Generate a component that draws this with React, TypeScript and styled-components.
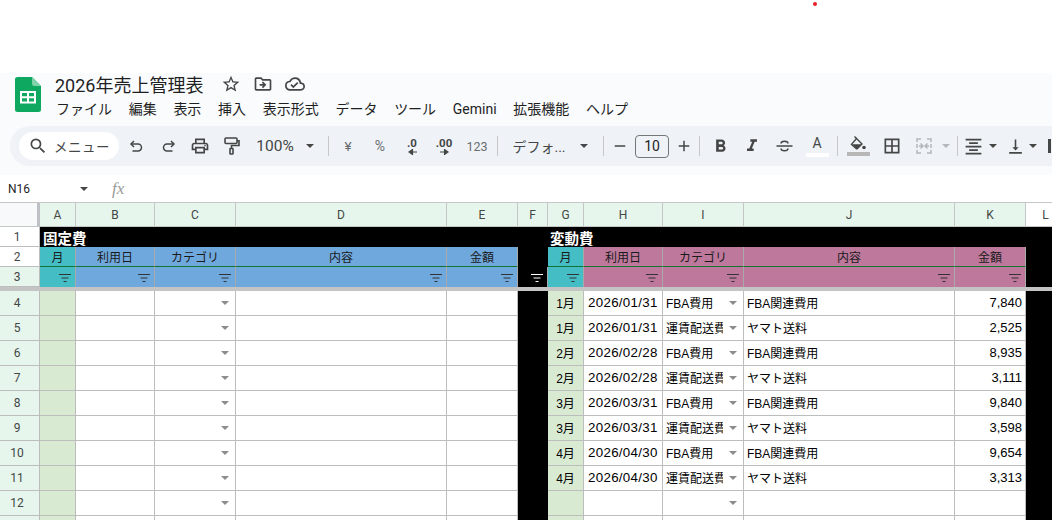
import styled, { createGlobalStyle } from 'styled-components'
import {
  MdSearch,
  MdOutlinePrint,
  MdStarBorder,
  MdOutlineDriveFileMove,
  MdOutlineCloudDone,
  MdFormatBold,
  MdFormatItalic,
  MdBorderAll,
  MdFormatAlignCenter,
  MdVerticalAlignBottom,
  MdAdd,
  MdRemove,
} from 'react-icons/md'

const menus = ['ファイル', '編集', '表示', '挿入', '表示形式', 'データ', 'ツール', 'Gemini', '拡張機能', 'ヘルプ']
const columns = ['A', 'B', 'C', 'D', 'E', 'F', 'G', 'H', 'I', 'J', 'K', 'L']
const headers = ['月', '利用日', 'カテゴリ', '内容', '金額']

const sales = [
  ['1月', '2026/01/31', 'FBA費用', 'FBA関連費用', '7,840'],
  ['1月', '2026/01/31', '運賃配送費', 'ヤマト送料', '2,525'],
  ['2月', '2026/02/28', 'FBA費用', 'FBA関連費用', '8,935'],
  ['2月', '2026/02/28', '運賃配送費', 'ヤマト送料', '3,111'],
  ['3月', '2026/03/31', 'FBA費用', 'FBA関連費用', '9,840'],
  ['3月', '2026/03/31', '運賃配送費', 'ヤマト送料', '3,598'],
  ['4月', '2026/04/30', 'FBA費用', 'FBA関連費用', '9,654'],
  ['4月', '2026/04/30', '運賃配送費', 'ヤマト送料', '3,313'],
  ['', '', '', '', ''],
]

const GlobalStyle = createGlobalStyle`
  html, body {
    margin: 0;
    background: #fff;
    overflow: hidden;
  }
  body {
    font-family: "Roboto", "Noto Sans CJK JP", sans-serif;
  }
`

const Page = styled.div`
  position: relative;
  width: 1052px;
  height: 520px;
  overflow: hidden;
  padding-top: 73px;
  box-sizing: border-box;
`

const RedDot = styled.div`
  position: absolute;
  left: 813px;
  top: 2px;
  width: 4px;
  height: 4px;
  border-radius: 50%;
  background: #e8202a;
`

const Chrome = styled.div`
  height: 102px;
  background: #f9fbfd;
`

const TitleArea = styled.div`
  height: 53px;
  display: flex;
  padding-left: 15px;
`

const LogoBox = styled.div`
  width: 26px;
  height: 35px;
  margin-top: 4px;
  margin-right: 14px;
`

const TitleColumn = styled.div`
  display: flex;
  flex-direction: column;
`

const TitleRow = styled.div`
  height: 22px;
  display: flex;
  align-items: center;
  color: #1f1f1f;
`

const DocTitle = styled.div`
  font-size: 18px;
  width: 160px;
  white-space: nowrap;
`

const TitleIcon = styled.span`
  width: 32px;
  display: flex;
  justify-content: center;
  font-size: 20px;
  color: #444746;
`

const MenuRow = styled.div`
  display: flex;
  gap: 16.700px;
  margin-top: 2px;
  margin-left: 1px;
  font-size: 14px;
  line-height: 24px;
  color: #1f1f1f;
`

const Toolbar = styled.div`
  height: 40px;
  margin-left: 10px;
  border-radius: 20px 0 0 20px;
  background: #eff3f8;
  display: flex;
  align-items: center;
  padding-left: 9px;
  color: #444746;
  white-space: nowrap;
`

const SearchPill = styled.div`
  width: 100px;
  height: 28px;
  border-radius: 14px;
  background: #fff;
  display: flex;
  align-items: center;
  padding-left: 9px;
  box-sizing: border-box;
  font-size: 13.500px;
  letter-spacing: 0.500px;
  color: #444746;
  flex: none;
  gap: 6px;
  margin-right: 1px;
`

const Tool = styled.div<{ $w: number; $size?: number; $soft?: boolean }>`
  width: ${(p) => p.$w}px;
  height: 28px;
  flex: none;
  display: flex;
  align-items: center;
  justify-content: center;
  font-size: ${(p) => p.$size ?? 20}px;
  color: ${(p) => (p.$soft ? '#6a6d6f' : '#444746')};
`

const Separator = styled.div<{ $ml?: number }>`
  width: 1px;
  height: 20px;
  margin-left: ${(p) => p.$ml ?? 0}px;
  background: #c7c7c7;
  flex: none;
`

const NextIcon = styled.div`
  width: 3px;
  height: 14px;
  margin-left: 14px;
  background: #444746;
  flex: none;
`

const Caret = styled.span<{ $muted?: boolean }>`
  flex: none;
  width: 0;
  height: 0;
  border-left: 4.500px solid transparent;
  border-right: 4.500px solid transparent;
  border-top: 4.500px solid ${(p) => (p.$muted ? '#b4b7ba' : '#444746')};
`

const SizeBox = styled.div`
  width: 34px;
  height: 23px;
  flex: none;
  border: 1px solid #747775;
  border-radius: 4px;
  box-sizing: border-box;
  display: flex;
  align-items: center;
  justify-content: center;
  font-size: 14px;
  color: #1f1f1f;
`

const DecimalLabel = styled.span`
  display: flex;
  flex-direction: column;
  align-items: center;
  font-size: 11.500px;
  font-weight: 700;
  line-height: 11px;
  color: #444746;
`

const ColorLetter = styled.div<{ $bar: string; $width?: number; $gap?: number }>`
  display: flex;
  flex-direction: column;
  align-items: center;
  font-size: 14px;
  line-height: 15px;
  color: #444746;
  &::after {
    content: '';
    display: block;
    width: ${(p) => p.$width ?? 23}px;
    height: 4px;
    margin-top: ${(p) => p.$gap ?? 2}px;
    background: ${(p) => p.$bar};
  }
`

const FormulaRow = styled.div`
  height: 27px;
  background: #fff;
  display: flex;
  align-items: center;
  padding-left: 8px;
  font-size: 12px;
  color: #1f1f1f;
`

const NameBox = styled.div`
  width: 72px;
`

const FormulaIcon = styled.span`
  margin-left: 24px;
  font-family: "Liberation Serif", serif;
  font-style: italic;
  font-size: 17px;
  color: #9a9a9a;
`

const Sheet = styled.div`
  display: grid;
  grid-template-columns: 40px 36px 79px 81px 211px 71px 30px 36px 79px 81px 211px 71px 40px;
  grid-template-rows: 24px 20px 20px 20px 4px repeat(10, 25px);
  border-top: 1px solid #c4c7c5;
  font-family: "Liberation Sans", "Noto Sans CJK JP", sans-serif;
  font-size: 12px;
  color: #000;
`

const BaseCell = styled.div`
  box-sizing: border-box;
  display: flex;
  align-items: center;
  white-space: nowrap;
  overflow: hidden;
`

const Corner = styled(BaseCell)`
  background: #f8f9fa;
  border-right: 3px solid #bdc1c6;
  border-bottom: 1px solid #c4c7c5;
`

const ColHead = styled(BaseCell)<{ $plain?: boolean }>`
  justify-content: center;
  background: ${(p) => (p.$plain ? '#fff' : '#e6f6ec')};
  border-right: 1px solid #c4c7c5;
  border-bottom: 1px solid #c4c7c5;
  font-family: "Roboto", sans-serif;
  font-size: 12px;
  color: #444746;
`

const RowHead = styled(BaseCell)<{ $tint?: boolean }>`
  justify-content: center;
  padding-right: 5px;
  background: ${(p) => (p.$tint ? '#e6f6ec' : '#fff')};
  border-right: 1px solid #bdbdbd;
  border-bottom: 1px solid #bdbdbd;
  font-family: "Roboto", sans-serif;
  font-size: 12px;
  color: #444746;
`

const Freeze = styled.div`
  grid-column: 1 / -1;
  background: #c4c4c4;
`

const TitleBand = styled(BaseCell)`
  grid-column: 2 / -1;
  background: #000;
  color: #fff;
  font-size: 14.500px;
  font-weight: 700;
  padding-left: 3px;
`

const BandGap = styled.div`
  width: 507px;
  flex: none;
`

const HeadCell = styled(BaseCell)<{ $bg: string }>`
  justify-content: center;
  padding-bottom: 1px;
  background: ${(p) => p.$bg};
  border-right: 1px solid #a9a9a9;
  border-bottom: 1px solid #137333;
  font-size: 12px;
  color: #1a1a1a;
`

const FilterCell = styled(BaseCell)<{ $bg: string }>`
  justify-content: flex-end;
  background: ${(p) => p.$bg};
  border-right: 1px solid #a9a9a9;
  padding: 2px 3px 0 0;
`

const BlackCell = styled.div`
  background: #000;
`

const MonthCell = styled(BaseCell)`
  justify-content: center;
  padding-bottom: 1px;
  background: #d9ead3;
  border-right: 1px solid #bdbdbd;
  border-bottom: 1px solid #bdbdbd;
`

const DataCell = styled(BaseCell)<{ $right?: boolean }>`
  justify-content: ${(p) => (p.$right ? 'flex-end' : 'flex-start')};
  padding: 0 3px 1px;
  background: #fff;
  border-right: 1px solid #bdbdbd;
  border-bottom: 1px solid #bdbdbd;
`

const DateText = styled.span`
  margin-left: 1px;
  font-size: 13.330px;
  letter-spacing: 0.300px;
`

const AmountText = styled.span`
  font-size: 13px;
`

const PickCell = styled(DataCell)`
  justify-content: space-between;
  padding-right: 0;
`

const PickText = styled.span`
  width: 57px;
  overflow: hidden;
  flex: none;
`

const PickCaret = styled.span`
  flex: none;
  margin-right: 6px;
  width: 0;
  height: 0;
  border-left: 4px solid transparent;
  border-right: 4px solid transparent;
  border-top: 4.500px solid #8c8c8c;
`

function SheetsLogo() {
  return (
    <svg width="26" height="35" viewBox="0 0 26 35">
      <path d="M2.500 0H17l9 9v23.500a2.500 2.500 0 0 1-2.500 2.500h-21A2.500 2.500 0 0 1 0 32.500v-30A2.500 2.500 0 0 1 2.500 0z" fill="#0fa861" />
      <path d="M17 0l9 9h-6.500A2.500 2.500 0 0 1 17 6.500z" fill="#7fd3ab" />
      <path d="M6 15h14v10.500H6z" fill="none" stroke="#fff" strokeWidth="2" />
      <path d="M6 20.200h14M13 15v10.500" stroke="#fff" strokeWidth="2" />
    </svg>
  )
}

function FilterIcon({ color = '#333' }: { color?: string }) {
  return (
    <svg width="14" height="10" viewBox="0 0 14 10">
      <path d="M1 1.500h12M3.500 5h7M5.500 8.500h3" stroke={color} strokeWidth="1.100" fill="none" />
    </svg>
  )
}

function UndoIcon({ flip }: { flip?: boolean }) {
  return (
    <svg
      width="15"
      height="15"
      viewBox="0 0 15 15"
      fill="none"
      stroke="#444746"
      strokeWidth="1.500"
      style={flip ? { transform: 'scaleX(-1)' } : undefined}
    >
      <path d="M5 2L2 5l3 3" />
      <path d="M2 5h7a3.500 3.500 0 0 1 0 7H3.500" />
    </svg>
  )
}

function RollerIcon() {
  return (
    <svg width="16" height="18" viewBox="0 0 16 18" fill="none" stroke="#444746" strokeWidth="1.600">
      <rect x="1" y="1" width="12" height="5.500" rx="1" />
      <path d="M13 3.800h2v4.700H7.500V11" />
      <rect x="6" y="11.500" width="3" height="5.500" rx="0.500" />
    </svg>
  )
}

function StrikeIcon() {
  return (
    <svg width="17" height="14" viewBox="0 0 17 14" fill="none" stroke="#444746" strokeWidth="1.500">
      <path d="M0.500 7h16" />
      <path d="M5 4.500C5 1.500 12 1.500 12 4.500M5 9.500c0 3 7 3 7 0" />
    </svg>
  )
}

function FillIcon() {
  return (
    <svg width="16" height="15" viewBox="0 0 16 15">
      <path d="M4.500 0.500l2 2" stroke="#444746" strokeWidth="1.400" fill="none" />
      <path d="M6.500 2.500L12 8l-4.500 4.500a1 1 0 0 1-1.400 0L1.500 8.400z" fill="none" stroke="#444746" strokeWidth="1.400" />
      <path d="M2 8.200h9.500L7.500 12.300a1 1 0 0 1-1.400 0z" fill="#444746" />
      <circle cx="14" cy="11.500" r="1.800" fill="#444746" />
    </svg>
  )
}

function MergeIcon() {
  return (
    <svg width="16" height="16" viewBox="0 0 16 16" fill="none" stroke="#b4b7ba" strokeWidth="1.500">
      <path d="M5 1H1v3M1 6v4M1 12v3h4M11 1h4v3M15 6v4M15 12v3h-4" />
      <path d="M3 8h3.500M4.500 5.500L7 8l-2.500 2.500M13 8H9.500M11.500 5.500L9 8l2.500 2.500" />
    </svg>
  )
}

function Arrow({ flip }: { flip?: boolean }) {
  return (
    <svg width="9" height="6" viewBox="0 0 9 6" style={flip ? { transform: 'scaleX(-1)' } : undefined}>
      <path d="M0 3h6M4.500 0.500L8 3 4.500 5.500z" stroke="#444746" strokeWidth="1.200" fill="#444746" />
    </svg>
  )
}

function App() {
  const headBlue = '#6fa8dc'
  const headPink = '#bd789b'
  const headTeal = '#45bdc4'

  return (
    <Page>
      <GlobalStyle />
      <RedDot />
      <Chrome>
        <TitleArea>
          <LogoBox>
            <SheetsLogo />
          </LogoBox>
          <TitleColumn>
            <TitleRow>
              <DocTitle>2026年売上管理表</DocTitle>
              <TitleIcon>
                <MdStarBorder />
              </TitleIcon>
              <TitleIcon>
                <MdOutlineDriveFileMove />
              </TitleIcon>
              <TitleIcon>
                <MdOutlineCloudDone />
              </TitleIcon>
            </TitleRow>
            <MenuRow>
              {menus.map((m) => (
                <span key={m}>{m}</span>
              ))}
            </MenuRow>
          </TitleColumn>
        </TitleArea>
        <Toolbar>
          <SearchPill>
            <MdSearch size={20} />
            メニュー
          </SearchPill>
          <Tool $w={32}><UndoIcon /></Tool>
          <Tool $w={32}><UndoIcon flip /></Tool>
          <Tool $w={32}><MdOutlinePrint /></Tool>
          <Tool $w={32}><RollerIcon /></Tool>
          <Tool $w={54} $size={15.500}>100%</Tool>
          <Tool $w={16}><Caret /></Tool>
          <Separator $ml={10} />
          <Tool $w={38} $size={13.500} $soft>¥</Tool>
          <Tool $w={26} $size={14} $soft>%</Tool>
          <Tool $w={38}><DecimalLabel>.0<Arrow flip /></DecimalLabel></Tool>
          <Tool $w={26}><DecimalLabel>.00<Arrow /></DecimalLabel></Tool>
          <Tool $w={40} $size={12.500} $soft>123</Tool>
          <Separator />
          <Tool $w={82} $size={14}>デフォ...</Tool>
          <Tool $w={8}><Caret /></Tool>
          <Separator $ml={15} />
          <Tool $w={31} $size={18}><MdRemove /></Tool>
          <SizeBox>10</SizeBox>
          <Tool $w={30} $size={18}><MdAdd /></Tool>
          <Separator />
          <Tool $w={40} $size={21}><MdFormatBold /></Tool>
          <Tool $w={24}><MdFormatItalic /></Tool>
          <Tool $w={40}><StrikeIcon /></Tool>
          <Tool $w={26}><ColorLetter $bar="#fff">A</ColorLetter></Tool>
          <Separator $ml={7} />
          <Tool $w={40}><ColorLetter $bar="#b7b7b7" $gap={1}><FillIcon /></ColorLetter></Tool>
          <Tool $w={28}><MdBorderAll /></Tool>
          <Tool $w={36}><MergeIcon /></Tool>
          <Tool $w={8}><Caret $muted /></Tool>
          <Separator $ml={7} />
          <Tool $w={30} $size={21}><MdFormatAlignCenter /></Tool>
          <Tool $w={10}><Caret /></Tool>
          <Tool $w={34} $size={19}><MdVerticalAlignBottom /></Tool>
          <Tool $w={2}><Caret /></Tool>
          <NextIcon />
        </Toolbar>
      </Chrome>
      <FormulaRow>
        <NameBox>N16</NameBox>
        <Caret />
        <FormulaIcon>fx</FormulaIcon>
      </FormulaRow>
      <Sheet>
        <Corner />
        {columns.map((c) => (
          <ColHead key={c} $plain={c === 'L'}>{c}</ColHead>
        ))}

        <RowHead>1</RowHead>
        <TitleBand>
          <BandGap>固定費</BandGap>
          変動費
        </TitleBand>

        <RowHead>2</RowHead>
        {headers.map((h, i) => (
          <HeadCell key={h} $bg={i === 0 ? headTeal : headBlue}>{h}</HeadCell>
        ))}
        <BlackCell />
        {headers.map((h, i) => (
          <HeadCell key={h} $bg={i === 0 ? headTeal : headPink}>{h}</HeadCell>
        ))}
        <BlackCell />

        <RowHead $tint>3</RowHead>
        {headers.map((h, i) => (
          <FilterCell key={h} $bg={i === 0 ? headTeal : headBlue}><FilterIcon /></FilterCell>
        ))}
        <FilterCell $bg="#000"><FilterIcon color="#fff" /></FilterCell>
        {headers.map((h, i) => (
          <FilterCell key={h} $bg={i === 0 ? headTeal : headPink}><FilterIcon /></FilterCell>
        ))}
        <BlackCell />

        <Freeze />

        {sales.map((row, i) => (
          <Row key={i} num={i + 4} row={row} />
        ))}
        <TailRow />
      </Sheet>
    </Page>
  )
}

function Row({ num, row }: { num: number; row: string[] }) {
  const [month, date, category, detail, amount] = row
  return (
    <>
      <RowHead $tint>{num}</RowHead>
      <MonthCell />
      <DataCell />
      <PickCell><PickText /><PickCaret /></PickCell>
      <DataCell />
      <DataCell />
      <BlackCell />
      <MonthCell>{month}</MonthCell>
      <DataCell><DateText>{date}</DateText></DataCell>
      <PickCell><PickText>{category}</PickText><PickCaret /></PickCell>
      <DataCell>{detail}</DataCell>
      <DataCell $right><AmountText>{amount}</AmountText></DataCell>
      <BlackCell />
    </>
  )
}

// 13行目は下端で切れるので中身なし
function TailRow() {
  return (
    <>
      <RowHead $tint />
      <MonthCell />
      <DataCell />
      <DataCell />
      <DataCell />
      <DataCell />
      <BlackCell />
      <MonthCell />
      <DataCell />
      <DataCell />
      <DataCell />
      <DataCell />
      <BlackCell />
    </>
  )
}

export default App
